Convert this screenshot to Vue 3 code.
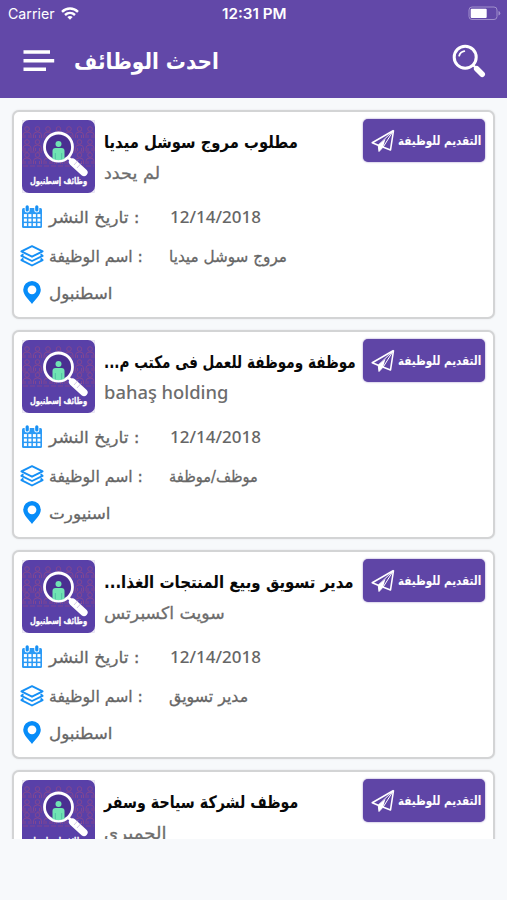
<script setup>
const jobs = [
  { title: 'مطلوب مروج سوشل ميديا', tw: 194, company: 'لم يحدد', cw: 56, job: 'مروج سوشل ميديا', jw: 118, place: 'اسطنبول', pw: 64 },
  { title: 'موظفة وموظفة للعمل فى مكتب م...', tw: 252, company: 'bahaş holding', cw: 124, latin: true, job: 'موظف/موظفة', jw: 89, place: 'اسنيورت', pw: 62 },
  { title: 'مدير تسويق وبيع المنتجات الغذا...', tw: 250, company: 'سويت اكسبرتس', cw: 121, job: 'مدير تسويق', jw: 79, place: 'اسطنبول', pw: 64 },
  { title: 'موظف لشركة سياحة وسفر', tw: 194, company: 'الحميري', cw: 63, job: 'موظف', jw: 45, place: 'اسطنبول', pw: 64 },
]

// Scales a line of text horizontally so that it fills the given width.
const vFit = {
  mounted(el, { value }) {
    el.style.transform = `scaleX(${value / el.offsetWidth})`
    el.style.marginRight = `${value - el.offsetWidth}px`
  },
}

const people = []
for (let r = 0; r < 3; r++) {
  for (let c = 0; c < 7; c++) people.push({ x: 5 + c * 10.5, y: 9 + r * 13 })
}
</script>

<template>
  <main class="screen">
    <header class="top">
      <div class="status">
        <div class="carrier">
          <span v-fit="47">Carrier</span>
          <svg width="18" height="13" viewBox="0 0 18 13" fill="none" stroke="#fff" stroke-width="2.4">
            <path d="M1 4.8C5.5 0.4 12.5 0.4 17 4.8" />
            <path d="M4 8C7 5.2 11 5.2 14 8" />
            <path d="M9 12.8L6.3 10Q9 7.8 11.7 10Z" fill="#fff" stroke="none" />
          </svg>
        </div>
        <div class="clock"><span v-fit="65">12:31 PM</span></div>
        <svg class="battery" width="33" height="15" viewBox="0 0 33 15">
          <rect x="1" y="1" width="28" height="12.5" rx="3" fill="none" stroke="#a08fcc" />
          <rect x="2.7" y="2.7" width="16" height="9.2" rx="1" fill="#fff" />
          <path d="M30.5 5v4.5q1.8-.5 1.8-2.2T30.5 5" fill="#a08fcc" />
        </svg>
      </div>
      <div class="bar">
        <svg class="menu" width="32" height="24" viewBox="0 0 32 24" stroke="#fff" stroke-width="3.4">
          <path d="M0.5 3H27M0.5 11.8H31.2M0.5 20.3H23" />
        </svg>
        <h1 v-fit="145" dir="rtl">احدث الوظائف</h1>
        <svg class="search" width="34" height="34" viewBox="0 0 34 34" fill="none" stroke="#fff" stroke-linecap="round">
          <circle cx="13.2" cy="13.2" r="11" stroke-width="3" />
          <path d="M7.2 11.7Q8.2 7.8 12.3 7.1" stroke-width="1.8" />
          <path d="M21.2 21.2L24 24" stroke-width="2.4" />
          <path d="M24.7 24.7L30.2 30.2" stroke-width="5.6" />
        </svg>
      </div>
    </header>

    <section class="list">
      <article v-for="(j, i) in jobs" :key="i" class="card">
        <div class="head">
          <div class="logo">
            <svg width="73" height="73" viewBox="0 0 73 73">
              <rect x=".4" y=".4" width="72.2" height="72.2" fill="#f3f0fa" stroke="#dcd6ea" stroke-width=".6" />
              <rect width="73" height="73" rx="7" fill="#5940a8" />
              <g fill="none" stroke="#a14c80" stroke-width=".8" opacity=".7">
                <g v-for="(p, k) in people" :key="k" :transform="`translate(${p.x} ${p.y})`">
                  <circle r="2.3" />
                  <path d="M-4 9V6Q-4 3 0 3T4 6V9M-2 9V6M2 9V6" />
                </g>
                <path d="M1 32H72M1 46H72" stroke-dasharray="5 2" />
              </g>
              <circle cx="36.5" cy="27" r="14" fill="#492f91" stroke="#fff" stroke-width="2.8" />
              <circle cx="36.5" cy="24" r="3" fill="#70e4b3" />
              <path d="M30.5 39V31Q30.5 28 33.5 28H39.5Q42.5 28 42.5 31V39Q36.5 41.3 30.5 39Z" fill="#70e4b3" />
              <path d="M33.3 33V39M39.7 33V39" stroke="#3da69a" stroke-width=".6" />
              <path d="M46.5 37.8L50 41.3" stroke="#fff" stroke-width="3" />
              <path d="M50.5 42L62 52.5" stroke="#fff" stroke-width="7.2" stroke-linecap="round" />
              <path d="M52 45L56 40.5M55 48L59 43.5" stroke="#c9bddf" stroke-width=".8" />
            </svg>
            <div class="logo-text"><span v-fit="57" dir="rtl">وظائف إسطنبول</span></div>
          </div>
          <div class="names">
            <h2 v-fit="j.tw" dir="rtl">{{ j.title }}</h2>
            <p v-fit="j.cw" dir="auto" :class="{ latin: j.latin }">{{ j.company }}</p>
          </div>
          <button class="apply">
            <svg width="24" height="24" viewBox="0 0 24 24" fill="none" stroke="#fff" stroke-width="1.6" stroke-linejoin="round">
              <path d="M22.5 1.5L1.2 13.7L7.2 16.2M22.5 1.5L19.5 21L11.8 18" />
              <path d="M22.5 1.5L7.2 16.2L8 22.5L12.2 18Z" fill="none" stroke-width="1" />
              <path d="M7 16L14.5 10L12 18L8 22.5Z" fill="#fff" stroke="none" />
            </svg>
            <span v-fit="83" dir="rtl">التقديم للوظيفة</span>
          </button>
        </div>

        <div class="row date">
          <svg width="20" height="23" viewBox="0 0 20 23">
            <rect y="3" width="20" height="20" rx="1.5" fill="#2b9af6" />
            <path d="M5.2 1.5V5M14.8 1.5V5" stroke="#fff" stroke-width="5" stroke-linecap="round" />
            <path d="M5.2 1.8V5M14.8 1.8V5" stroke="#1690f5" stroke-width="3.2" stroke-linecap="round" />
            <g fill="#fff">
              <template v-for="r in 3" :key="r">
                <rect v-for="c in 4" :key="c" :x="c * 4.5 - 2.6" :y="r * 4.5 + 4.6" width="3" height="3" />
              </template>
            </g>
          </svg>
          <div class="label"><span v-fit="91">تاريخ النشر :</span></div>
          <div class="value latin"><span v-fit="91">12/14/2018</span></div>
        </div>
        <div class="row role">
          <svg width="24" height="22" viewBox="0 0 24 22" fill="none" stroke="#1690f5" stroke-width="1.9" stroke-linejoin="round">
            <path d="M12 1.2L22.6 6.4L12 11.7L1.4 6.4Z" />
            <path d="M3.4 9.2L1.4 10.8L12 16L22.6 10.8L20.6 9.2" />
            <path d="M3.4 13.5L1.4 15.1L12 20.5L22.6 15.1L20.6 13.5" />
          </svg>
          <div class="label"><span v-fit="94">اسم الوظيفة :</span></div>
          <div class="value job"><span v-fit="j.jw">{{ j.job }}</span></div>
        </div>
        <div class="row place">
          <svg width="18" height="23" viewBox="0 0 18 23">
            <path fill="#078cf8" fill-rule="evenodd" d="M9 0A8.8 8.8 0 0 0 .2 8.8C.2 14.5 6.5 19.2 9 23C11.5 19.2 17.8 14.5 17.8 8.8A8.8 8.8 0 0 0 9 0ZM9 4.4a4.4 4.4 0 1 1 0 8.8a4.4 4.4 0 0 1 0-8.8Z" />
          </svg>
          <div class="label"><span v-fit="j.pw">{{ j.place }}</span></div>
        </div>
      </article>
    </section>
  </main>
</template>

<style>
body {
  background: #f7f9fb;
}
</style>

<style scoped>
.screen {
  width: 507px;
  height: 900px;
  overflow: hidden;
  background: #f7f9fb;
  font-family: "DejaVu Sans", sans-serif;
}
.top {
  height: 98px;
  background: #6248a8;
  color: #fff;
}
.status {
  display: grid;
  grid-template-columns: 1fr 66px 1fr;
  align-items: center;
  height: 27px;
  padding: 0 6px 0 8px;
  font-family: Inter, sans-serif;
  font-size: 14.5px;
}
.carrier {
  display: flex;
  align-items: center;
  gap: 6px;
}
.clock {
  display: flex;
  font-weight: 600;
}
.battery {
  justify-self: end;
}
.bar {
  display: flex;
  align-items: center;
  height: 68px;
  padding: 0 21px 0 23px;
}
.menu {
  margin-right: 19px;
}
.search {
  margin-left: auto;
}
span,
h1,
h2,
p {
  display: inline-block;
  margin: 0;
  white-space: nowrap;
  transform-origin: left center;
}
h1 {
  padding-top: 2px;
  font-size: 22px;
  line-height: 30px;
}
.list {
  display: flex;
  flex-direction: column;
  gap: 11px;
  height: 729px;
  padding: 12px 12px 0;
  overflow: hidden;
}
.card {
  flex: none;
  box-sizing: border-box;
  height: 209px;
  padding: 8px;
  border: 2px solid #d3d4d5;
  border-radius: 7px;
  background: #fff;
  box-shadow: 0 0 2px #dfe0e2;
}
.head {
  display: flex;
  height: 73px;
}
.logo {
  display: grid;
  flex: none;
  width: 73px;
  height: 73px;
}
.logo > * {
  grid-area: 1 / 1;
}
.logo-text {
  display: flex;
  align-self: end;
  padding: 0 0 3px 8px;
  color: #fff;
  font-size: 9px;
  font-weight: bold;
  line-height: 17px;
  -webkit-text-stroke: 0.3px #fff;
}
.names {
  display: flex;
  flex-direction: column;
  align-items: flex-start;
  width: 261px;
  padding: 7px 0 0 9px;
}
h2 {
  color: #080808;
  font-size: 17px;
  line-height: 30px;
}
p {
  color: #6d6d6d;
  font-size: 17px;
  line-height: 33px;
  -webkit-text-stroke: 0.3px #6d6d6d;
}
.latin {
  font-family: "Noto Sans", sans-serif;
  font-weight: 500;
  -webkit-text-stroke: 0;
}
p.latin {
  font-size: 18.5px;
  line-height: 30px;
}
.apply {
  display: flex;
  align-items: center;
  flex: none;
  gap: 3px;
  width: 122px;
  height: 43px;
  margin-top: -1px;
  padding: 0 0 0 8px;
  border: 0;
  border-radius: 5px;
  background: #5f45a6;
  box-shadow: 0 0 2px #8d7ac0;
  color: #fff;
  font: bold 12.5px "DejaVu Sans", sans-serif;
}
.row {
  display: grid;
  grid-template-columns: 20px 112px 1fr;
  column-gap: 8px;
  align-items: center;
  justify-items: start;
  color: #666;
  font-size: 16px;
}
.row svg {
  justify-self: center;
}
.row div {
  display: flex;
}
.label,
.job {
  padding-top: 1px;
  -webkit-text-stroke: 0.3px #666;
}
.label {
  margin-left: -1px;
}
.job {
  margin-left: -1px;
}
.date {
  height: 47px;
}
.role {
  height: 31px;
}
.place {
  height: 43px;
}
.value.latin {
  font-size: 17px;
}
</style>
